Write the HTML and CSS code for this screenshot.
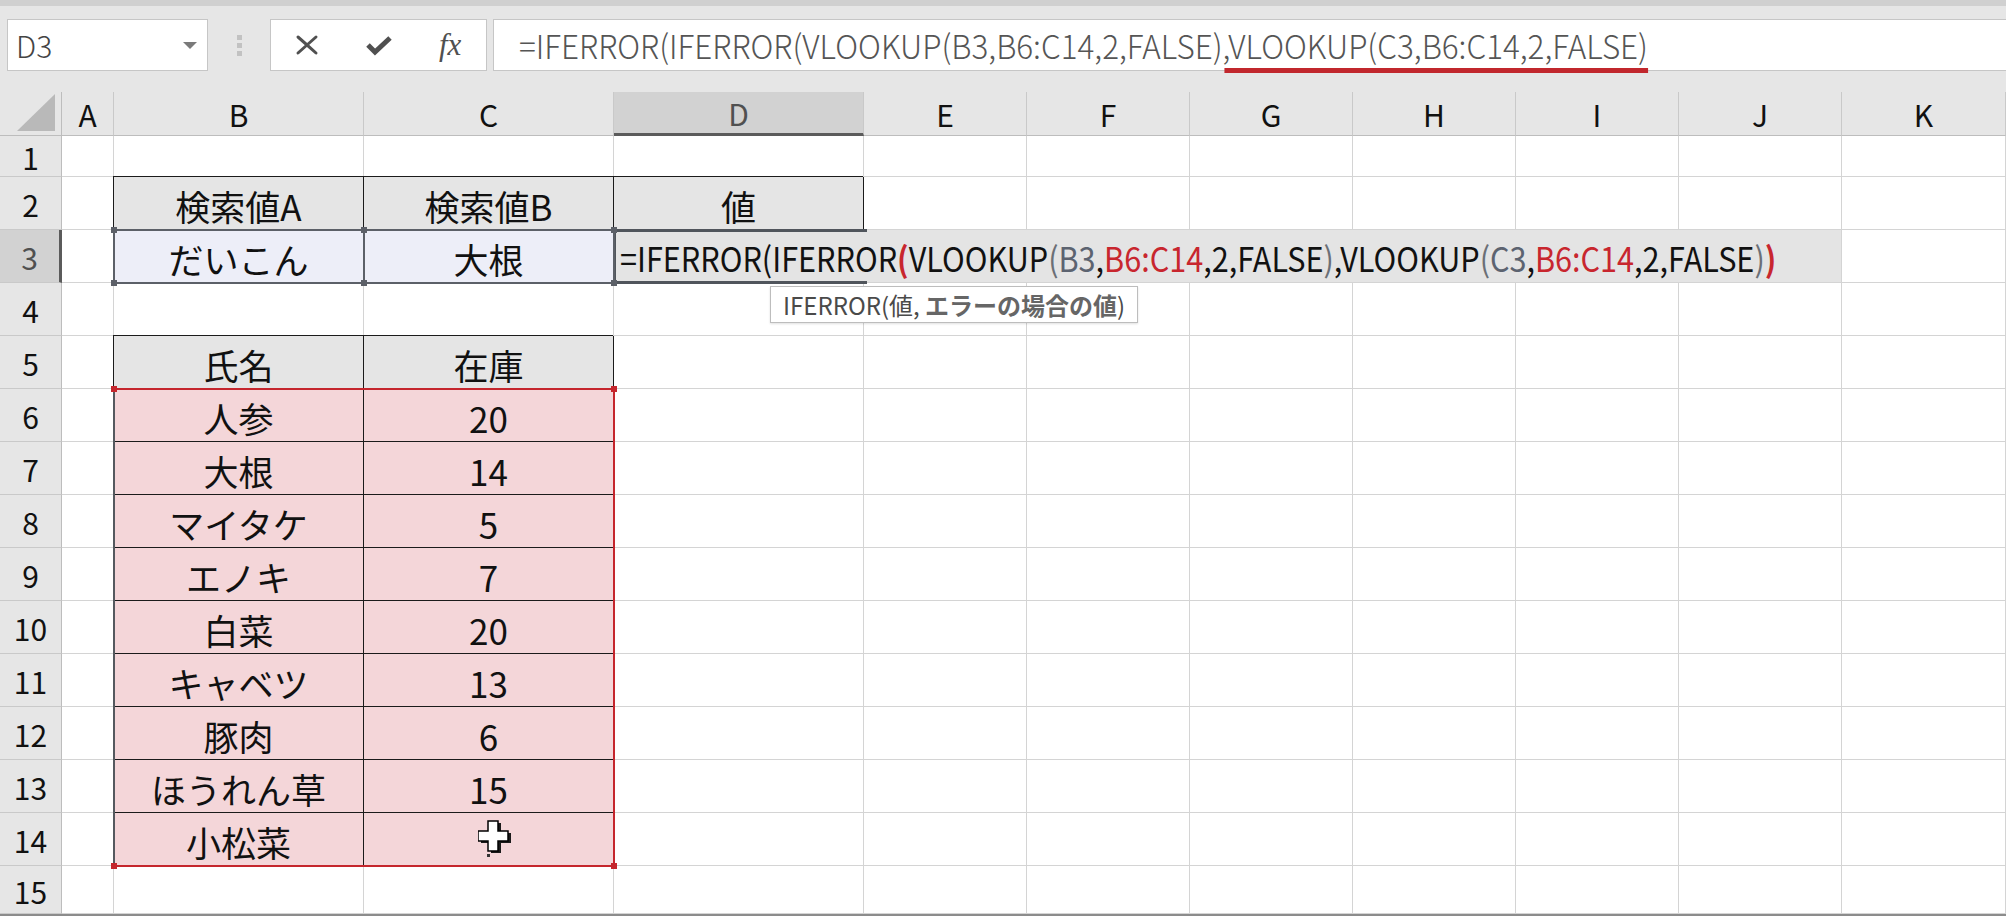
FILE: index.html
```html
<!DOCTYPE html>
<html lang="ja">
<head>
  <meta charset="UTF-8" />
  <title>IFERROR VLOOKUP</title>
  <link rel="stylesheet" href="styles.css">
</head>
<body>
<div class="top-strip"></div>
<div class="toolbar">
  <div class="name-box">
    <span>D3</span>
    <svg class="drop" width="14" height="7" viewBox="0 0 14 7"><path d="M0 0h14L7 7z" /></svg>
  </div>
  <div class="grip"><i></i><i></i><i></i></div>
  <div class="fx-buttons">
    <span class="btn">
      <svg width="24" height="22" viewBox="0 0 24 22"><path d="M3 3 Q11 10 21 19 M21 3 Q12 11 3 19" fill="none" stroke="#505050" stroke-width="3" stroke-linecap="round" /></svg>
    </span>
    <span class="btn">
      <svg width="28" height="22" viewBox="0 0 28 22"><path d="M3 11 L10 18 L25 4" fill="none" stroke="#505050" stroke-width="5" stroke-linejoin="miter" /></svg>
    </span>
    <span class="btn fx">fx</span>
  </div>
  <div class="formula-box"><span class="src">=IFERROR(IFERROR(VLOOKUP(B3,B6:C14,2,FALSE)<span class="mark">,VLOOKUP(C3,B6:C14,2,FALSE)</span></span></div>
</div>

<div class="sheet">
  <!-- column headers -->
  <div class="c ch corner"><svg width="40" height="38" viewBox="0 0 40 38"><path d="M0 37 L38 0 L38 37 Z" fill="#b9b9b9" /></svg></div>
  <div class="c ch">A</div>
  <div class="c ch">B</div>
  <div class="c ch">C</div>
  <div class="c ch sel">D</div>
  <div class="c ch">E</div>
  <div class="c ch">F</div>
  <div class="c ch">G</div>
  <div class="c ch">H</div>
  <div class="c ch">I</div>
  <div class="c ch">J</div>
  <div class="c ch">K</div>

  <!-- row 1 -->
  <div class="c rh">1</div>
  <div class="c"></div><div class="c"></div><div class="c"></div><div class="c"></div><div class="c"></div><div class="c"></div>
  <div class="c"></div><div class="c"></div><div class="c"></div><div class="c"></div><div class="c"></div>

  <!-- row 2 -->
  <div class="c rh">2</div>
  <div class="c"></div>
  <div class="c t th">検索値A</div>
  <div class="c t th">検索値B</div>
  <div class="c t th">値</div>
  <div class="c"></div><div class="c"></div><div class="c"></div><div class="c"></div><div class="c"></div><div class="c"></div><div class="c"></div>

  <!-- row 3 -->
  <div class="c rh sel">3</div>
  <div class="c"></div>
  <div class="c t q">だいこん</div>
  <div class="c t q">大根</div>
  <div class="c edit"><span class="src">=IFERROR(IFERROR<b class="pr">(</b>VLOOKUP<span class="gp">(</span><span class="rg">B3</span>,<span class="rr">B6:C14</span>,2,FALSE<span class="gp">)</span>,VLOOKUP<span class="gp">(</span><span class="rg">C3</span>,<span class="rr">B6:C14</span>,2,FALSE<span class="gp">)</span><b class="pr">)</b></span></div>
  <div class="c"></div>

  <!-- row 4 -->
  <div class="c rh">4</div>
  <div class="c"></div><div class="c"></div><div class="c"></div><div class="c"></div><div class="c"></div><div class="c"></div>
  <div class="c"></div><div class="c"></div><div class="c"></div><div class="c"></div><div class="c"></div>

  <!-- row 5 -->
  <div class="c rh">5</div>
  <div class="c"></div>
  <div class="c t th">氏名</div>
  <div class="c t th">在庫</div>
  <div class="c"></div><div class="c"></div><div class="c"></div><div class="c"></div><div class="c"></div><div class="c"></div><div class="c"></div><div class="c"></div>

  <!-- rows 6 - 14 -->
  <div class="c rh">6</div>
  <div class="c"></div>
  <div class="c t p">人参</div>
  <div class="c t p">20</div>
  <div class="c"></div><div class="c"></div><div class="c"></div><div class="c"></div><div class="c"></div><div class="c"></div><div class="c"></div><div class="c"></div>

  <div class="c rh">7</div>
  <div class="c"></div>
  <div class="c t p">大根</div>
  <div class="c t p">14</div>
  <div class="c"></div><div class="c"></div><div class="c"></div><div class="c"></div><div class="c"></div><div class="c"></div><div class="c"></div><div class="c"></div>

  <div class="c rh">8</div>
  <div class="c"></div>
  <div class="c t p">マイタケ</div>
  <div class="c t p">5</div>
  <div class="c"></div><div class="c"></div><div class="c"></div><div class="c"></div><div class="c"></div><div class="c"></div><div class="c"></div><div class="c"></div>

  <div class="c rh">9</div>
  <div class="c"></div>
  <div class="c t p">エノキ</div>
  <div class="c t p">7</div>
  <div class="c"></div><div class="c"></div><div class="c"></div><div class="c"></div><div class="c"></div><div class="c"></div><div class="c"></div><div class="c"></div>

  <div class="c rh">10</div>
  <div class="c"></div>
  <div class="c t p">白菜</div>
  <div class="c t p">20</div>
  <div class="c"></div><div class="c"></div><div class="c"></div><div class="c"></div><div class="c"></div><div class="c"></div><div class="c"></div><div class="c"></div>

  <div class="c rh">11</div>
  <div class="c"></div>
  <div class="c t p">キャベツ</div>
  <div class="c t p">13</div>
  <div class="c"></div><div class="c"></div><div class="c"></div><div class="c"></div><div class="c"></div><div class="c"></div><div class="c"></div><div class="c"></div>

  <div class="c rh">12</div>
  <div class="c"></div>
  <div class="c t p">豚肉</div>
  <div class="c t p">6</div>
  <div class="c"></div><div class="c"></div><div class="c"></div><div class="c"></div><div class="c"></div><div class="c"></div><div class="c"></div><div class="c"></div>

  <div class="c rh">13</div>
  <div class="c"></div>
  <div class="c t p">ほうれん草</div>
  <div class="c t p">15</div>
  <div class="c"></div><div class="c"></div><div class="c"></div><div class="c"></div><div class="c"></div><div class="c"></div><div class="c"></div><div class="c"></div>

  <div class="c rh">14</div>
  <div class="c"></div>
  <div class="c t p">小松菜</div>
  <div class="c t p"></div>
  <div class="c"></div><div class="c"></div><div class="c"></div><div class="c"></div><div class="c"></div><div class="c"></div><div class="c"></div><div class="c"></div>

  <!-- row 15 -->
  <div class="c rh">15</div>
  <div class="c"></div><div class="c"></div><div class="c"></div><div class="c"></div><div class="c"></div><div class="c"></div>
  <div class="c"></div><div class="c"></div><div class="c"></div><div class="c"></div><div class="c"></div>

  <!-- selection frames, tooltip and pointer drawn on top of the grid -->
  <div class="marks">
    <div class="ref ref-b3"><i class="tl"></i><i class="tr"></i><i class="bl"></i><i class="br"></i></div>
    <div class="ref ref-c3"><i class="tl"></i><i class="tr"></i><i class="bl"></i><i class="br"></i></div>
    <div class="active"></div>
    <div class="range"><i class="tl"></i><i class="tr"></i><i class="bl"></i><i class="br"></i></div>
    <div class="tip"><span>IFERROR(値, <b>エラーの場合の値</b>)</span></div>
    <svg class="cursor" width="36" height="38" viewBox="0 0 36 38">
      <path d="M13 3h10v10h10v10h-10v10h-10v-10h-10v-10h10z" fill="#1a1a1a" />
      <path d="M10 1h10v10h10v10h-10v10h-10v-10h-10v-10h10z" fill="#fff" stroke="#000" stroke-width="1.5" />
      <rect x="9" y="34" width="3" height="3" fill="#333" />
    </svg>
  </div>
</div>
</body>
</html>
```

FILE: styles.css
```css
* {
  box-sizing: border-box;
}
html, body {
  margin: 0;
  padding: 0;
}
body {
  width: 2006px;
  height: 916px;
  overflow: hidden;
  background: #fff;
  color: #111;
  font-family: "Noto Sans CJK JP", "Noto Sans", sans-serif;
}

/* formula bar */
.top-strip {
  height: 6px;
  background: #d0d0d0;
}
.toolbar {
  display: flex;
  align-items: flex-start;
  height: 86px;
  padding: 13px 0 0 7px;
  background: #e6e6e6;
}
.name-box {
  display: flex;
  align-items: center;
  justify-content: space-between;
  width: 201px;
  height: 52px;
  padding: 0 10px 0 8px;
  background: #fff;
  border: 1px solid #c6c6c6;
  font-size: 30px;
  font-weight: 300;
  color: #444;
}
.drop path {
  fill: #7a7a7a;
}
.grip {
  display: flex;
  flex-direction: column;
  align-items: center;
  justify-content: center;
  gap: 3px;
  width: 62px;
  height: 52px;
}
.grip i {
  width: 5px;
  height: 5px;
  background: #c2c2c2;
}
.fx-buttons {
  display: flex;
  width: 217px;
  height: 52px;
  background: #fff;
  border: 1px solid #c6c6c6;
}
.btn {
  flex: 1;
  display: flex;
  align-items: center;
  justify-content: center;
  color: #505050;
}
.btn.fx {
  font-family: "Liberation Serif", serif;
  font-style: italic;
  font-size: 31px;
}
.formula-box {
  flex: 1;
  height: 52px;
  margin: 0 -2px 0 6px;
  padding-left: 25px;
  background: #fff;
  border: 1px solid #c6c6c6;
  font-size: 33px;
  font-weight: 300;
  line-height: 50px;
  color: #555;
  white-space: nowrap;
}
.formula-box .src {
  display: inline-block;
  transform: scaleX(0.952);
  transform-origin: left center;
}
.mark {
  position: relative;
  display: inline-block;
}
.mark::after {
  content: "";
  position: absolute;
  left: 2px;
  right: 0;
  bottom: -3px;
  height: 5px;
  background: #c1272d;
}

/* worksheet grid */
.sheet,
.marks {
  display: grid;
  grid-template-columns: 62px 52px 250px 250px 250px repeat(6, 163px) 164px;
  grid-template-rows: 44px 41px repeat(13, 53px) 48px;
}
.sheet {
  position: relative;
  border-bottom: 2px solid #8c8c8c;
}
.c {
  display: flex;
  align-items: center;
  justify-content: center;
  padding-top: 4px;
  border-right: 1px solid #d4d4d4;
  border-bottom: 1px solid #d4d4d4;
  font-size: 35px;
  line-height: 1;
  white-space: nowrap;
}
.ch {
  padding-top: 0;
  background: #e6e6e6;
  border-right-color: #c9c9c9;
  border-bottom-color: #bdbdbd;
  font-size: 30px;
}
.ch.sel {
  background: #d2d2d2;
  color: #505050;
  border-bottom: 3px solid #5b5b5b;
}
.corner {
  align-items: flex-end;
  justify-content: flex-end;
  padding: 0 4px 3px 0;
  border-right-color: #bdbdbd;
}
.rh {
  padding-top: 2px;
  background: #e6e6e6;
  border-right-color: #bdbdbd;
  border-bottom-color: #c9c9c9;
  font-size: 30px;
}
.rh.sel {
  background: #d2d2d2;
  color: #505050;
  border-right: 3px solid #5b5b5b;
}

/* table cells */
.t {
  border-right-color: #1b1b1b;
  border-bottom-color: #1b1b1b;
  box-shadow: -1px -1px 0 #1b1b1b;
}
.th {
  background: #e5e5e5;
}
.q {
  background: #edeef8;
}
.p {
  background: #f4d6d9;
}

/* cell being edited, its text spills over to column J */
.edit {
  grid-column: span 7;
  justify-content: flex-start;
  padding-left: 6px;
  background: #e4e4e4;
  font-size: 34px;
  color: #111;
}
.edit .src {
  transform: scaleX(0.9);
  transform-origin: left center;
}
.edit b {
  font-weight: 700;
}
.pr { color: #c8262e; }
.gp { color: #6b6f76; }
.rg { color: #5c6370; }
.rr { color: #c8262e; }

/* overlay layer */
.marks {
  position: absolute;
  inset: 0;
  pointer-events: none;
}
.ref,
.range {
  position: relative;
  margin: -1px;
  border: 2px solid #5c6068;
}
.ref i,
.range i {
  position: absolute;
  width: 6px;
  height: 6px;
  background: #5c6068;
}
.range i {
  background: #c5262d;
}
.tl { left: -4px; top: -4px; }
.tr { right: -4px; top: -4px; }
.bl { left: -4px; bottom: -4px; }
.br { right: -4px; bottom: -4px; }
.ref-b3 {
  grid-row: 4;
  grid-column: 3;
}
.ref-c3 {
  grid-row: 4;
  grid-column: 4;
}
.active {
  grid-row: 4;
  grid-column: 5;
  margin: -1px -3px -1px -1px;
  border: 3px solid #50555c;
  border-right: 0;
}
.range {
  grid-row: 7 / 16;
  grid-column: 3 / 5;
  border-color: #c5262d;
  border-left-color: #55595f;
}
.tip {
  grid-row: 5;
  grid-column: 5 / 9;
  align-self: start;
  justify-self: start;
  display: flex;
  align-items: center;
  height: 37px;
  margin: 3px 0 0 156px;
  padding: 0 12px;
  background: #fff;
  border: 1px solid #bdbdbd;
  box-shadow: 0 1px 2px rgba(0, 0, 0, 0.12);
  font-size: 24px;
  color: #4a4a4a;
  white-space: nowrap;
}
.tip b {
  font-weight: 700;
  color: #666;
}
.cursor {
  grid-row: 15;
  grid-column: 4;
  margin: 7px 0 0 114px;
}
```
